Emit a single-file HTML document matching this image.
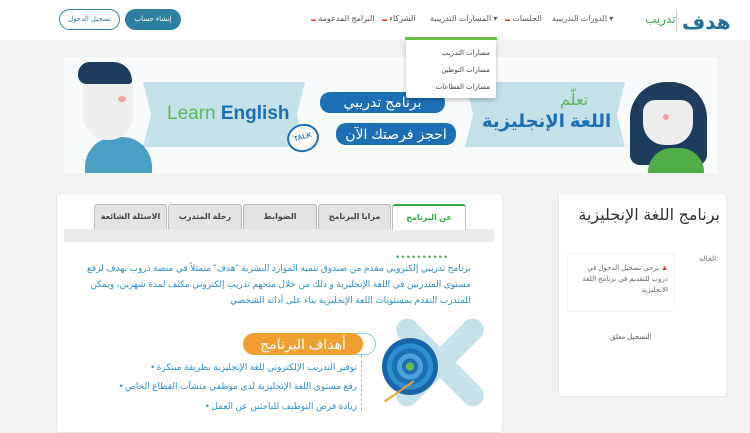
<!DOCTYPE html>
<html><head><meta charset="utf-8"><style>
*{margin:0;padding:0;box-sizing:border-box}
body{width:750px;height:430px;overflow:hidden;background:#f1f1f1;font-family:"Liberation Sans","DejaVu Sans",sans-serif;position:relative}
.a{position:absolute}
.hdr{left:0;top:0;width:750px;height:40px;background:#fff}
.nav{font-size:8px;color:#555;top:14px;white-space:nowrap}
.r{color:#e53935;font-size:5px}
.card{background:#fff;border:1px solid #e6e6e6;border-radius:3px}
.tab{top:204px;height:25px;background:#e3e3e3;border:1px solid #bbb;border-bottom:none;border-radius:3px 3px 0 0;font-size:8px;color:#444;text-align:center;line-height:24px;font-weight:bold}
.bl{color:#2a8fcf;font-size:9px;direction:rtl;text-align:right;white-space:nowrap}
.bub{background:#c4e1ea;clip-path:polygon(0 0,100% 0,95% 50%,100% 100%,0 100%,5% 50%)}
</style></head><body>
<div class="a hdr"></div>
<div class="a" style="left:682px;top:10px;font-size:20px;font-weight:bold;color:#1e6f9a;letter-spacing:-1px">هدف</div>
<div class="a" style="left:676px;top:10px;width:1px;height:22px;background:#ccc"></div>
<div class="a" style="left:645px;top:12px;font-size:12px;color:#3aa64a">تدريب</div>
<div class="a nav" style="left:552px">الدورات التدريبية ▾</div>
<div class="a nav" style="left:505px"><span class="r">▬</span> الجلسات</div>
<div class="a nav" style="left:430px">المسارات التدريبية ▾</div>
<div class="a nav" style="left:382px"><span class="r">▬</span> الشركاء</div>
<div class="a nav" style="left:311px"><span class="r">▬</span> البرامج المدعومة</div>
<div class="a" style="left:405px;top:37px;width:92px;height:3px;background:#6cbf45"></div>
<div class="a" style="left:125px;top:9px;width:56px;height:21px;border-radius:11px;background:#2d7fa0;color:#fff;font-size:7px;text-align:center;line-height:21px">إنشاء حساب</div>
<div class="a" style="left:59px;top:9px;width:61px;height:21px;border-radius:11px;border:1px solid #2d7fa0;color:#2d7fa0;font-size:7px;text-align:center;line-height:19px;background:#fff">تسجيل الدخول</div>
<!-- banner -->
<div class="a" style="left:64px;top:57px;width:654px;height:116px;background:#f8fbfc"></div>
<div class="a bub" style="left:143px;top:82px;width:162px;height:65px"></div>
<div class="a" style="left:167px;top:103px;font-size:19px;color:#5cb85c">Learn <span style="color:#1c6fb5;font-weight:bold">English</span></div>
<div class="a bub" style="left:465px;top:82px;width:160px;height:65px"></div>
<div class="a" style="left:560px;top:90px;font-size:16px;color:#5cb85c">تعلّم</div>
<div class="a" style="left:482px;top:111px;font-size:18px;font-weight:bold;color:#1c6fb5">اللغة الإنجليزية</div>
<div class="a" style="left:320px;top:92px;width:125px;height:21px;border-radius:10px;background:#1c6fb5;color:#fff;font-size:14px;text-align:center;line-height:21px">برنامج تدريبي</div>
<div class="a" style="left:336px;top:123px;width:120px;height:22px;border-radius:10px;background:#1c6fb5;color:#fff;font-size:14px;text-align:center;line-height:22px">احجز فرصتك الآن</div>
<div class="a" style="left:287px;top:124px;width:32px;height:28px;border-radius:50%;border:2px solid #1c6fb5;background:#fff;font-size:7px;font-weight:bold;color:#1c6fb5;text-align:center;line-height:24px;transform:rotate(-15deg)">TALK</div>
<!-- man -->
<div class="a" style="left:85px;top:137px;width:67px;height:36px;background:#4a9fc5;border-radius:30px 30px 0 0"></div>
<div class="a" style="left:83px;top:70px;width:50px;height:70px;background:#eee;border-radius:16px 16px 24px 24px"></div>
<div class="a" style="left:78px;top:62px;width:54px;height:22px;background:#1d3c5e;border-radius:14px 22px 4px 10px"></div>
<div class="a" style="left:118px;top:96px;width:8px;height:6px;border-radius:50%;background:#f4a0a0"></div>
<!-- woman -->
<div class="a" style="left:630px;top:82px;width:77px;height:83px;background:#1d3c5e;border-radius:36px 36px 10px 10px"></div>
<div class="a" style="left:643px;top:100px;width:50px;height:45px;background:#eee;border-radius:12px 12px 22px 22px"></div>
<div class="a" style="left:663px;top:114px;width:6px;height:6px;border-radius:50%;background:#f4a0a0"></div>
<div class="a" style="left:648px;top:148px;width:56px;height:25px;background:#4fae45;border-radius:24px 24px 0 0"></div>
<!-- dropdown -->
<div class="a" style="left:406px;top:40px;width:90px;height:58px;background:#fff;box-shadow:0 2px 5px rgba(0,0,0,.25);border-radius:2px"></div>
<div class="a" style="left:420px;top:49px;font-size:7px;color:#444;width:70px;text-align:right">مسارات التدريب</div>
<div class="a" style="left:420px;top:66px;font-size:7px;color:#444;width:70px;text-align:right">مسارات التوطين</div>
<div class="a" style="left:420px;top:83px;font-size:7px;color:#444;width:70px;text-align:right">مسارات القطاعات</div>
<!-- left card -->
<div class="a card" style="left:56px;top:193px;width:447px;height:240px"></div>
<div class="a" style="left:64px;top:229px;width:430px;height:13px;background:#e9ecef"></div>
<div class="a tab" style="left:392px;width:74px;background:#fff;border-top:2px solid #3aa64a;color:#3aa64a;height:26px">عن البرنامج</div>
<div class="a tab" style="left:318px;width:73px">مزايا البرنامج</div>
<div class="a tab" style="left:243px;width:74px">الضوابط</div>
<div class="a tab" style="left:168px;width:74px">رحلة المتدرب</div>
<div class="a tab" style="left:94px;width:73px">الاسئلة الشائعة</div>
<div class="a" style="left:396px;top:252px;font-size:9px;color:#3aa64a;letter-spacing:2.2px">••••••••••</div>
<div class="a bl" style="right:279px;top:263px">برنامج تدريبي إلكتروني مقدم من صندوق تنمية الموارد البشرية "هدف" متمثلاً في منصة دروب بهدف لرفع</div>
<div class="a bl" style="right:279px;top:279px">مستوى المتدربين في اللغة الإنجليزية و ذلك من خلال منحهم تدريب إلكتروني مكثف لمدة شهرين، ويمكن</div>
<div class="a bl" style="right:279px;top:295px">للمتدرب التقدم بمستويات اللغة الإنجليزية بناء على أدائه الشخصي</div>
<!-- target -->
<div class="a" style="left:429px;top:305px;width:22px;height:115px;background:#c4e1ea;border-radius:11px;transform:rotate(45deg)"></div>
<div class="a" style="left:429px;top:305px;width:22px;height:115px;background:#c4e1ea;border-radius:11px;transform:rotate(-45deg)"></div>
<div class="a" style="left:382px;top:338px;width:56px;height:57px;border-radius:50%;background:radial-gradient(circle,#6cbf45 0 4px,#1c6fb5 4px 8px,#4aa3dc 8px 13px,#1c6fb5 13px 18px,#2d8fd0 18px 23px,#1565a8 23px)"></div>
<div class="a" style="left:378px;top:380px;width:36px;height:2px;background:#f0a030;transform:rotate(-35deg);transform-origin:right"></div>
<div class="a" style="left:243px;top:333px;width:120px;height:22px;border-radius:11px;background:#f0a030;color:#fff;font-size:14px;text-align:center;line-height:22px">أهداف البرنامج</div>
<div class="a" style="left:356px;top:333px;width:20px;height:22px;border:1px solid #8cc8e4;border-left:none;border-radius:0 11px 11px 0"></div>
<div class="a" style="left:361px;top:355px;width:1px;height:56px;border-left:1px dashed #8cc8e4"></div>
<div class="a bl" style="right:393px;top:362px">توفير التدريب الإلكتروني للغة الإنجليزية بطريقة مبتكرة •</div>
<div class="a bl" style="right:393px;top:381px">رفع مستوى اللغة الإنجليزية لدى موظفي منشآت القطاع الخاص •</div>
<div class="a bl" style="right:393px;top:401px">زيادة فرص التوظيف للباحثين عن العمل •</div>
<!-- right card -->
<div class="a card" style="left:558px;top:193px;width:169px;height:204px"></div>
<div class="a" style="left:565px;top:205px;width:155px;text-align:right;font-size:16px;color:#333">برنامج اللغة الإنجليزية</div>
<div class="a" style="left:680px;top:255px;font-size:7px;color:#666;width:38px;text-align:right">الحالة:</div>
<div class="a" style="left:567px;top:253px;width:108px;height:59px;border:1px solid #eee;border-radius:3px"></div>
<div class="a" style="left:572px;top:263px;width:96px;font-size:7px;color:#666;direction:rtl;text-align:right;line-height:11px"><span style="color:#c62828">▲</span> يرجى تسجيل الدخول في دروب للتقديم في برنامج اللغة الانجليزية</div>
<div class="a" style="left:610px;top:333px;font-size:7px;color:#555">التسجيل مغلق</div>
</body></html>
